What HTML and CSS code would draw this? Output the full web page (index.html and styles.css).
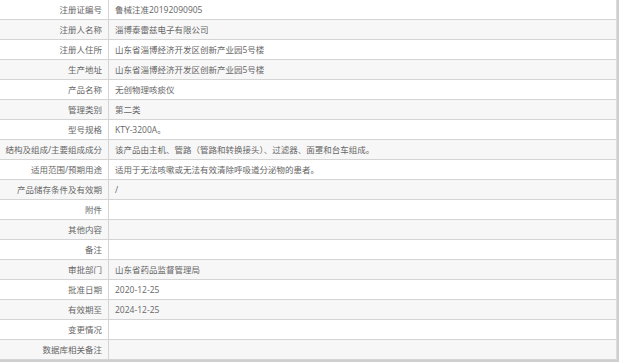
FILE: index.html
```html
<!DOCTYPE html>
<html lang="zh-CN">
<head>
<meta charset="utf-8">
<link rel="stylesheet" href="styles.css">
</head>
<body>
<div class="wrap">
  <div class="info">
    <div class="row"><div class="k">注册证编号</div><div class="v">鲁械注准20192090905</div></div>
    <div class="row"><div class="k">注册人名称</div><div class="v">淄博泰雷兹电子有限公司</div></div>
    <div class="row"><div class="k">注册人住所</div><div class="v">山东省淄博经济开发区创新产业园5号楼</div></div>
    <div class="row"><div class="k">生产地址</div><div class="v">山东省淄博经济开发区创新产业园5号楼</div></div>
    <div class="row"><div class="k">产品名称</div><div class="v">无创物理咳痰仪</div></div>
    <div class="row"><div class="k">管理类别</div><div class="v">第二类</div></div>
    <div class="row"><div class="k">型号规格</div><div class="v">KTY-3200A。</div></div>
    <div class="row"><div class="k">结构及组成/主要组成成分</div><div class="v">该产品由主机、管路（管路和转换接头）、过滤器、面罩和台车组成。</div></div>
    <div class="row"><div class="k">适用范围/预期用途</div><div class="v">适用于无法咳嗽或无法有效清除呼吸道分泌物的患者。</div></div>
    <div class="row"><div class="k">产品储存条件及有效期</div><div class="v">/</div></div>
    <div class="row"><div class="k">附件</div><div class="v"></div></div>
    <div class="row"><div class="k">其他内容</div><div class="v"></div></div>
    <div class="row"><div class="k">备注</div><div class="v"></div></div>
    <div class="row"><div class="k">审批部门</div><div class="v">山东省药品监督管理局</div></div>
    <div class="row"><div class="k">批准日期</div><div class="v">2020-12-25</div></div>
    <div class="row"><div class="k">有效期至</div><div class="v">2024-12-25</div></div>
    <div class="row"><div class="k">变更情况</div><div class="v"></div></div>
    <div class="row"><div class="k">数据库相关备注</div><div class="v"></div></div>
  </div>
</div>
</body>
</html>
```
FILE: styles.css
```css
html, body {
  margin: 0;
  padding: 0;
  background: #fff;
}
body {
  font-family: "Open Sans", "Noto Sans CJK SC", sans-serif;
  font-size: 8.5px;
  color: #666;
}
.wrap {
  width: 617px;
  border-right: 2px solid #cfcfcf;
  border-bottom: 2px solid #cfcfcf;
}
.info {
  border-right: 1px solid #dcdcdc;
}
.row {
  display: grid;
  grid-template-columns: 109px 1fr;
  height: 19px;
  border-bottom: 1px solid #d4d4d4;
}
.row:nth-child(even) {
  background: #f7f7f7;
}
.k {
  border-right: 1px solid #d4d4d4;
  text-align: right;
  padding-right: 6px;
  line-height: 19px;
  white-space: nowrap;
}
.v {
  padding-left: 6px;
  line-height: 19px;
  white-space: nowrap;
}
```
